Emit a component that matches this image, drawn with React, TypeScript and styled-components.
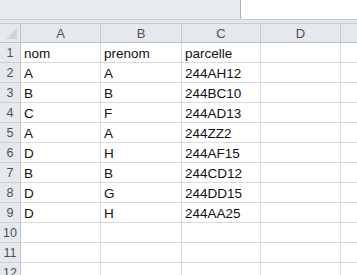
import React from "react";
import styled, { createGlobalStyle } from "styled-components";

const Global = createGlobalStyle`
  html, body { margin: 0; padding: 0; background: #ffffff; }
  body { width: 357px; height: 275px; overflow: hidden; font-family: "Liberation Sans", Arial, sans-serif; }
`;

const Page = styled.div`
  width: 357px;
  height: 275px;
  overflow: hidden;
  display: flex;
  flex-direction: column;
`;

const TopBar = styled.div`
  display: flex;
  height: 19px;
  flex: 0 0 19px;
  border-bottom: 1px solid #c9ced5;
`;

const NameArea = styled.div`
  flex: 0 0 240px;
  background: #e7eaee;
`;

const FormulaBox = styled.div`
  flex: 1;
  background: #ffffff;
  border-left: 1px solid #aab1ba;
`;

const Band = styled.div`
  height: 3px;
  flex: 0 0 3px;
  background: #e3e7ec;
`;

const Grid = styled.div`
  display: grid;
  grid-template-columns: 21px 80px 81px 79px 80px 40px;
  grid-auto-rows: 20px;
`;

const Corner = styled.div`
  position: relative;
  background: #e5e9ee;
  border-top: 1px solid #c6ccd3;
  border-right: 1px solid #bfc5cc;
  border-bottom: 1px solid #bfc5cc;
  box-sizing: border-box;
  &::after {
    content: "";
    position: absolute;
    right: 3px;
    bottom: 3px;
    width: 0;
    height: 0;
    border-left: 11px solid transparent;
    border-bottom: 11px solid #cfd4da;
  }
`;

const ColHead = styled.div`
  background: #e5e9ee;
  border-top: 1px solid #c6ccd3;
  border-right: 1px solid #c3c9d0;
  border-bottom: 1px solid #bfc5cc;
  box-sizing: border-box;
  display: flex;
  align-items: center;
  justify-content: center;
  font-size: 13px;
  color: #4d5258;
`;

const RowHead = styled.div`
  background: #e5e9ee;
  border-right: 1px solid #bfc5cc;
  border-bottom: 1px solid #cdd2d8;
  box-sizing: border-box;
  display: flex;
  align-items: center;
  justify-content: center;
  font-size: 12.5px;
  color: #4d5258;
`;

const Cell = styled.div`
  background: #ffffff;
  border-right: 1px solid #d9dbdd;
  border-bottom: 1px solid #d9dbdd;
  box-sizing: border-box;
  padding: 1px 0 0 3px;
  display: flex;
  align-items: center;
  font-size: 13.5px;
  color: #111111;
  white-space: nowrap;
  overflow: hidden;
`;

const cols = ["A", "B", "C", "D", ""];
const data: string[][] = [
  ["nom", "prenom", "parcelle"],
  ["A", "A", "244AH12"],
  ["B", "B", "244BC10"],
  ["C", "F", "244AD13"],
  ["A", "A", "244ZZ2"],
  ["D", "H", "244AF15"],
  ["B", "B", "244CD12"],
  ["D", "G", "244DD15"],
  ["D", "H", "244AA25"],
  [],
  [],
  [],
];

export default function App() {
  return (
    <Page>
      <Global />
      <TopBar>
        <NameArea />
        <FormulaBox />
      </TopBar>
      <Band />
      <Grid>
        <Corner />
        {cols.map((c, i) => (
          <ColHead key={i}>{c}</ColHead>
        ))}
        {data.map((row, r) => (
          <React.Fragment key={r}>
            <RowHead>{r + 1}</RowHead>
            {cols.map((_, c) => (
              <Cell key={c}>{row[c] ?? ""}</Cell>
            ))}
          </React.Fragment>
        ))}
      </Grid>
    </Page>
  );
}
